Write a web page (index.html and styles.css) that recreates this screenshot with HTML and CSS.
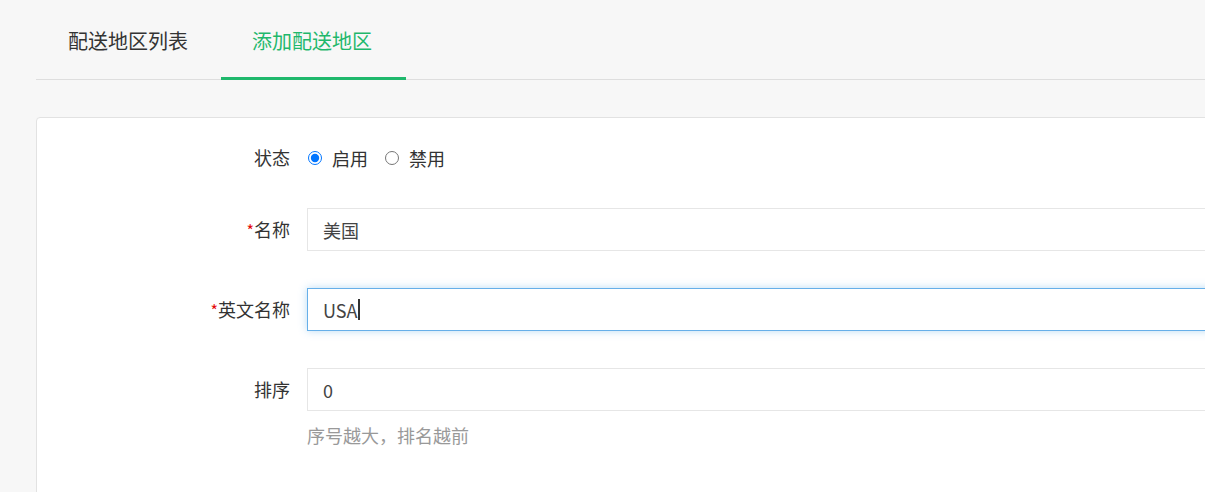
FILE: index.html
```html
<!DOCTYPE html>
<html>
<head>
<meta charset="UTF-8">
<title>添加配送地区</title>
<link rel="stylesheet" href="styles.css">
</head>
<body>
<div class="page">
	<div class="tabs">
		<a class="tab" href="#">配送地区列表</a>
		<a class="tab active" href="#">添加配送地区</a>
	</div>

	<div class="card">
		<form class="form">
			<div class="row row-radio">
				<label class="label">状态</label>
				<div class="field radios">
					<label class="radio"><input type="radio" name="status" checked> 启用</label>
					<label class="radio"><input type="radio" name="status"> 禁用</label>
				</div>
			</div>
			<div class="row">
				<label class="label"><span class="req">*</span>名称</label>
				<div class="field"><input class="input" type="text" value="美国"></div>
			</div>
			<div class="row">
				<label class="label"><span class="req">*</span>英文名称</label>
				<div class="field">
					<input class="input focus" type="text" value="USA">
					<span class="caret"></span>
				</div>
			</div>
			<div class="row row-last">
				<label class="label">排序</label>
				<div class="field">
					<input class="input" type="text" value="0">
					<div class="help">序号越大，排名越前</div>
				</div>
			</div>
		</form>
	</div>
</div>
</body>
</html>
```

FILE: styles.css
```css
body {
	margin: 0;
	padding: 0;
	background: #f7f7f7;
	font-family: "Noto Sans CJK SC", "Liberation Sans", sans-serif;
	color: #333;
	overflow: hidden;
}

.page {
	margin-left: 36px;
	width: 1300px;
}

/* tabs */
.tabs {
	display: flex;
	height: 79px;
	border-bottom: 1px solid #dedede;
}
.tab {
	display: flex;
	align-items: center;
	padding: 4px 32px 0 32px;
	font-size: 20px;
	color: #333;
	text-decoration: none;
	box-sizing: border-box;
	margin-bottom: -1px;
	border-bottom: 3px solid transparent;
}
.tab.active {
	margin-left: 1px;
	padding-left: 31px;
	padding-right: 34px;
	color: #1fb86c;
	border-bottom-color: #1fb86c;
}

/* card */
.card {
	margin-top: 37px;
	background: #fff;
	border: 1px solid #e2e2e2;
	border-radius: 4px;
	padding: 18px 0 60px 0;
}

.row {
	display: grid;
	grid-template-columns: 253px 1fr;
	column-gap: 17px;
	align-items: start;
	margin-bottom: 37px;
}
.row-radio {
	margin-bottom: 29px;
}
.row-last {
	margin-bottom: 0;
}

.label {
	height: 43px;
	font-size: 18px;
	line-height: 43px;
	text-align: right;
	overflow: hidden;
}
.req {
	color: #e4080a;
	font-size: 16px;
	line-height: 1;
}

.field {
	position: relative;
}

.radios {
	display: flex;
	align-items: center;
	height: 43px;
	font-size: 18px;
}
.radio {
	display: flex;
	align-items: center;
	margin-right: 16px;
}
.radio input {
	width: 14px;
	height: 14px;
	margin: 0 10px 0 1px;
}

.input {
	display: block;
	box-sizing: border-box;
	width: 100%;
	height: 43px;
	padding: 0 15px;
	border: 1px solid #e6e6e6;
	font-family: "Noto Sans CJK SC", "Liberation Sans", sans-serif;
	font-size: 18px;
	color: #444;
	outline: none;
	background: #fff;
}
.input.focus,
.input:focus {
	border-color: #66afe9;
	box-shadow: 0 0 8px rgba(102, 175, 233, 0.45);
}

/* text cursor in the focused field */
.caret {
	position: absolute;
	left: 51px;
	top: 11px;
	width: 2px;
	height: 21px;
	background: #333;
}

.help {
	margin-top: 11px;
	font-size: 18px;
	line-height: 26px;
	color: #999;
}
```
